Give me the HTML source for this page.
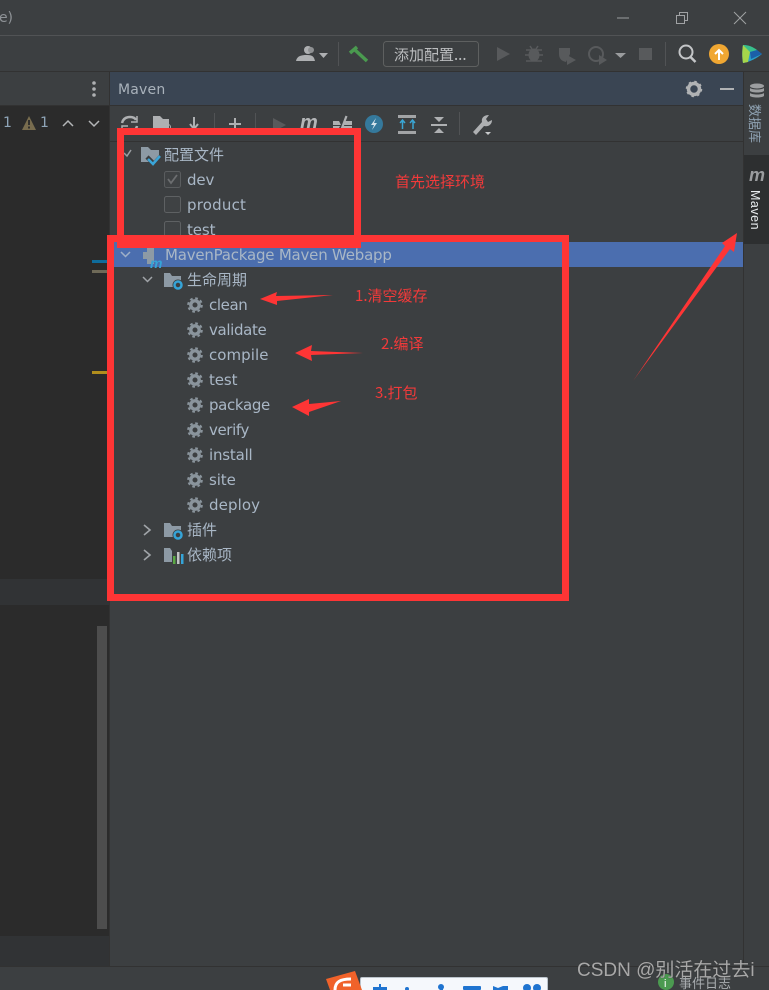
<!DOCTYPE html>
<html><head><meta charset="utf-8"><style>
*{box-sizing:border-box}
html,body{margin:0;padding:0;width:769px;height:990px;overflow:hidden;background:#3c3f41}
body{position:relative;font-family:"Liberation Sans","Noto Sans CJK SC",sans-serif}
.a{position:absolute}
.t{position:absolute;white-space:nowrap;color:#a9b7c6;font-size:15px;line-height:20px;font-family:"DejaVu Sans","Noto Sans CJK SC",sans-serif;letter-spacing:-.1px}
.c{font-family:"Noto Sans CJK SC",sans-serif;font-size:15px;letter-spacing:0}
.r{position:absolute;white-space:nowrap;color:#f23a3a;font-size:15px;line-height:18px;font-family:"Noto Sans CJK SC",sans-serif}
svg{position:absolute;overflow:visible}
</style></head><body>
<div class="a" style="left:0;top:35px;width:769px;height:1px;background:#515355"></div>
<div class="a" style="left:0;top:71px;width:769px;height:1px;background:#323232"></div>
<div class="a" style="left:0;top:106px;width:110px;height:860px;background:#2b2b2b"></div>
<div class="a" style="left:0;top:105px;width:110px;height:1px;background:#323232"></div>
<div class="a" style="left:0;top:579px;width:109px;height:26px;background:#313335"></div>
<div class="a" style="left:0;top:936px;width:109px;height:30px;background:#313335"></div>
<div class="a" style="left:97px;top:626px;width:10px;height:303px;background:#4d4d4d"></div>
<div class="a" style="left:109px;top:72px;width:1px;height:895px;background:#323232"></div>
<div class="a" style="left:0;top:966px;width:769px;height:1px;background:#323232"></div>
<div class="a" style="left:110px;top:72px;width:633px;height:33px;background:#3a4553"></div>
<div class="a" style="left:110px;top:105px;width:633px;height:1px;background:#323232"></div>
<div class="a" style="left:110px;top:141px;width:633px;height:1px;background:#323232"></div>
<div class="a" style="left:743px;top:72px;width:1px;height:895px;background:#323232"></div>
<div class="a" style="left:744px;top:155px;width:25px;height:89px;background:#2d2f30"></div>
<div class="a" style="left:110px;top:242px;width:633px;height:25px;background:#4b6eaf"></div>
<div class="a" style="left:92px;top:260px;width:18px;height:3px;background:#0f6c9c"></div>
<div class="a" style="left:92px;top:270px;width:18px;height:3px;background:#6f6a58"></div>
<div class="a" style="left:92px;top:371px;width:18px;height:3px;background:#b18e1d"></div>

<div class="t" style="left:-1px;top:8px;font-size:14px;color:#8e9296">e)</div>
<div class="t" style="left:118px;top:80px;font-size:14px;color:#a9b2bb;letter-spacing:.2px">Maven</div>
<div class="t" style="left:3px;top:113px;font-size:14px;color:#8fa5b8">1</div>
<div class="t" style="left:40px;top:113px;font-size:14px;color:#8fa5b8">1</div>

<!-- window controls -->
<svg style="left:0;top:0" width="769" height="72" fill="none">
<path d="M617 18h12" stroke="#9a9c9e" stroke-width="1"/>
<rect x="676.500" y="15.500" width="8" height="8" stroke="#a0a2a4"/><path d="M679.500 15v-2.500h8v8H685" stroke="#a0a2a4"/>
<path d="M734 12l12 12M746 12l-12 12" stroke="#a0a2a4"/>
<circle cx="308" cy="50" r="4" fill="#aeb0b2"/><path d="M296 61c1-5 5-6 11-6s7 2 8 6z" fill="#aeb0b2"/><circle cx="311" cy="50" r="3" fill="#8f9193"/>
<path d="M319 53h9l-4.500 5z" fill="#aeb0b2"/>
<path d="M338.500 42v24" stroke="#515355"/>
<path d="M350 53L357 47" stroke="#4a9a4f" stroke-width="3.500"/><path d="M355 50L367 61" stroke="#4a9a4f" stroke-width="3.500"/>
<rect x="383.500" y="41.500" width="95" height="25" rx="3" stroke="#5e6060"/>
<path d="M497 47l13 7-13 7z" fill="#585a5c"/>
<ellipse cx="534" cy="55" rx="5.500" ry="6.500" fill="#585a5c"/><path d="M526 50l16 0M525 55h18M526 61h16M530 46l2 3M538 46l-2 3" stroke="#585a5c" stroke-width="1.500"/>
<path d="M559 48h11v6l-4 8c-5-1-7-4-7-8z" fill="#585a5c"/><path d="M567 55l9 5-9 5z" fill="#585a5c"/>
<circle cx="596" cy="54" r="7" stroke="#585a5c" stroke-width="2"/><path d="M599 55l8 5-8 5z" fill="#585a5c"/>
<path d="M615 53h11l-5.500 5z" fill="#9a9c9e"/>
<rect x="639" y="48" width="13" height="12" fill="#585a5c"/>
<path d="M665.500 42v24" stroke="#515355"/>
<circle cx="686" cy="52" r="6.500" stroke="#c4c6c8" stroke-width="2"/><path d="M690.500 57l5 5" stroke="#c4c6c8" stroke-width="2.500"/>
<circle cx="719" cy="54" r="10" fill="#f0a732"/><path d="M719 60v-10M715 54l4-4 4 4" stroke="#fff" stroke-width="2"/>
<path d="M743 45c7 0 14 5 19 9-5 4-12 8-19 9-1-5-1-13 0-18z" fill="#2a9fc8"/><path d="M743 45c6 0 10 2 14 5l-7 2z" fill="#38c08c"/><path d="M743 45l7 7-2 10-5 1c-1-5-1-13 0-18z" fill="#a5d64a"/><path d="M750 52l7-2 5 4-11 5z" fill="#1b5fa8"/>
</svg>
<div class="t c" style="left:394px;top:45px;color:#bbbdbf">添加配置...</div>

<!-- panel header/editor icons -->
<svg style="left:0;top:72px" width="769" height="70" fill="none">
<circle cx="94" cy="11" r="1.800" fill="#aeb0b2"/><circle cx="94" cy="17" r="1.800" fill="#aeb0b2"/><circle cx="94" cy="23" r="1.800" fill="#aeb0b2"/>
<path d="M22 58L29 44L36 58z" fill="#786c4e"/><path d="M29 48v5M29 54.500v2" stroke="#2b2b2b" stroke-width="1.800"/>
<path d="M63 54l5-5 5 5M89 49l5 5 5-5" stroke="#b4b6b8" stroke-width="1.500"/>
<circle cx="694" cy="17" r="5.500" stroke="#b0b2b4" stroke-width="3.500"/><circle cx="694" cy="17" r="7.500" stroke="#b0b2b4" stroke-width="1.500" stroke-dasharray="2.500 3.400"/>
<path d="M720 17h14" stroke="#b0b2b4" stroke-width="2"/>
<path d="M122 51c1-4 4-6 8-6 3 0 5 1 6 3M137 54c-1 4-4 6-8 6-3 0-5-1-6-3" stroke="#aeb0b2" stroke-width="2.500"/><path d="M137 44v6h-6M122 60v-6h6" stroke="#aeb0b2" stroke-width="1.500"/>
<path d="M153 44h7l3 3h6v9l-16 4z" fill="#aeb0b2"/><circle cx="168" cy="55" r="2.500" stroke="#aeb0b2"/>
<path d="M194 45v11M190 52l4 5 4-5" stroke="#aeb0b2" stroke-width="2"/>
<path d="M214.500 41v22M255.500 41v22M459.500 40v23" stroke="#515355"/>
<path d="M235 46v12M229 52h12" stroke="#aeb0b2" stroke-width="2"/>
<path d="M273 46l13 7-13 7z" fill="#585a5c"/>
<path d="M333 49h6l2 4h-8zM333 54h7l-1 2h-6zM345 49h7v4h-8zM343 54h9v2h-9z" fill="#aeb0b2"/><path d="M346.500 44l-6 16" stroke="#aeb0b2" stroke-width="2.200"/>
<circle cx="374" cy="52" r="9" fill="#35799c"/><path d="M376 46l-5 7h3l-2 5 5-7h-3z" fill="#d5e4ec"/>
<path d="M398 44h18v3h-18zM398 60h18v3h-18z" fill="#a2a4a6" transform="translate(0,-1)"/><path d="M402.500 57v-9M413 57v-9M400 51l2.500-3 2.500 3M410 51l2.500-3 2.500 3" stroke="#3aa5d3" stroke-width="1.500"/>
<path d="M431 53h16" stroke="#aeb0b2" stroke-width="2"/><path d="M434 45h10l-5 5zM434 61h10l-5-5z" fill="#aeb0b2"/>
<path d="M473 60l9-10c-1-4 2-7 7-7l-3 4 2 3 4-2c0 5-4 7-8 6l-8 9z" fill="#aeb0b2"/><path d="M485 60h6l-3 3z" fill="#c8cacc"/>
</svg>
<div class="t" style="left:300px;top:113px;font-size:20px;font-weight:bold;font-style:italic;color:#b4b6b8;font-family:'Liberation Sans',sans-serif">m</div>

<!-- tree -->
<svg style="left:0;top:142px" width="300" height="430" fill="none">
<path d="M124 11l3 3 4-6" stroke="#9a9ea2" stroke-width="1.500"/>
<path d="M141 5h7l3 3h8v12h-18z" fill="#8d9aa5"/><path d="M147 15l7 7 8-9" stroke="#3c3f41" stroke-width="4.500"/><path d="M148 17l5 5 7-8" stroke="#3aa5d8" stroke-width="2.500"/>
<rect x="164.500" y="29.500" width="16" height="16" rx="2" fill="#3f4244" stroke="#5a5d5f"/><path d="M168 37l3 4 6-8" stroke="#6c6e70" stroke-width="1.800"/>
<rect x="164.500" y="54.500" width="16" height="16" rx="2" fill="#3f4244" stroke="#5e6163"/>
<rect x="164.500" y="79.500" width="16" height="16" rx="2" fill="#3f4244" stroke="#5e6163"/>
<path d="M121 110l4.500 4.500 4.500-4.500" stroke="#9fb0c8" stroke-width="1.500"/>
<path d="M147 105h7v17h-7zM143 110h8v7h-8z" fill="#8d9aa5"/>
<path d="M143 135l4.500 4.500 4.500-4.500" stroke="#a0a4a8" stroke-width="1.500"/>
<path d="M144 383l6 5-6 5M144 408l6 5-6 5" stroke="#a0a4a8" stroke-width="1.600"/>
<path d="M164 131h6l2 3h9v11h-17z" fill="#8d9aa5"/><circle cx="178" cy="143" r="5.500" fill="#3c3f41"/><circle cx="178" cy="143" r="3.500" stroke="#35a4d8" stroke-width="2.500"/>
<path d="M164 381h6l2 3h9v11h-17z" fill="#8d9aa5"/><circle cx="178" cy="393" r="5.500" fill="#3c3f41"/><circle cx="178" cy="393" r="3.500" stroke="#35a4d8" stroke-width="2.500"/>
<path d="M164 406h6l2 3h9v11h-17z" fill="#8d9aa5"/><path d="M172 409h12v13h-12z" fill="#3c3f41"/><path d="M173 414h2.500v8H173z" fill="#5aa845"/><path d="M177 410h2.500v12H177z" fill="#c2c4c6"/><path d="M181 412h2.500v10H181z" fill="#35a4d8"/>
<g stroke="#8a949c">
<g id="g"><circle cx="195" cy="163" r="4.200" stroke-width="3.400"/><circle cx="195" cy="163" r="6.800" stroke-width="2" stroke-dasharray="2.700 2.640"/></g>
<use href="#g" y="25"/><use href="#g" y="50"/><use href="#g" y="75"/><use href="#g" y="100"/><use href="#g" y="125"/><use href="#g" y="150"/><use href="#g" y="175"/><use href="#g" y="200"/>
</g>
</svg>
<div class="t" style="left:150px;top:253px;font-size:14px;font-weight:bold;font-style:italic;color:#35a4d8;font-family:'Liberation Sans',sans-serif">m</div>
<div class="t c" style="left:164px;top:145px">配置文件</div>
<div class="t" style="left:187px;top:170px">dev</div>
<div class="t" style="left:187px;top:195px;letter-spacing:.2px">product</div>
<div class="t" style="left:187px;top:220px">test</div>
<div class="t" style="left:165px;top:245px;letter-spacing:-.22px">MavenPackage Maven Webapp</div>
<div class="t c" style="left:187px;top:270px">生命周期</div>
<div class="t" style="left:209px;top:295px;letter-spacing:-.4px">clean</div>
<div class="t" style="left:209px;top:320px;letter-spacing:-.35px">validate</div>
<div class="t" style="left:209px;top:345px;letter-spacing:.05px">compile</div>
<div class="t" style="left:209px;top:370px">test</div>
<div class="t" style="left:209px;top:395px;letter-spacing:-.35px">package</div>
<div class="t" style="left:209px;top:420px;letter-spacing:-.4px">verify</div>
<div class="t" style="left:209px;top:445px;letter-spacing:-.2px">install</div>
<div class="t" style="left:209px;top:470px">site</div>
<div class="t" style="left:209px;top:495px;letter-spacing:.1px">deploy</div>
<div class="t c" style="left:187px;top:520px">插件</div>
<div class="t c" style="left:187px;top:545px">依赖项</div>

<!-- right sidebar -->
<svg style="left:744px;top:82px" width="25" height="20" fill="#9c9ea0"><ellipse cx="13" cy="4" rx="7" ry="2.500"/><path d="M6 6c2 2 12 2 14 0v3c-2 2-12 2-14 0zM6 11c2 2 12 2 14 0v3c-2 2-12 2-14 0z"/></svg>
<div class="t c" style="left:748px;top:104px;writing-mode:vertical-rl;text-orientation:sideways;font-size:13px;line-height:14px;color:#8fa2b2">数据库</div>
<div class="t" style="left:749px;top:165px;font-size:18px;font-weight:bold;font-style:italic;color:#9a9c9e;font-family:'Liberation Sans',sans-serif">m</div>
<div class="t" style="left:747px;top:190px;writing-mode:vertical-rl;font-size:12.500px;line-height:15px;color:#e8ecef;font-family:'Liberation Sans',sans-serif;letter-spacing:.5px">Maven</div>

<!-- red boxes -->
<div class="a" style="left:117px;top:128px;width:244px;height:120px;border:7px solid #fe3535"></div>
<div class="a" style="left:107px;top:235px;width:462px;height:366px;border:7px solid #fe3535"></div>

<!-- arrows -->
<svg style="left:0;top:0" width="769" height="990" fill="#fe3535">
<path d="M260 299l17-7-1 4 57-1-56 6 0 4z"/>
<path d="M295 353l17-8-1 6 52 2-52 2 1 6z"/>
<path d="M292 407l17-8-0 5 32-3-32 11 0 4z"/>
<path d="M737 233L722 243L725 246L633 381L730 249L734 252z"/>
</svg>
<div class="r" style="left:395px;top:173px">首先选择环境</div>
<div class="r" style="left:355px;top:287px">1.清空缓存</div>
<div class="r" style="left:381px;top:335px">2.编译</div>
<div class="r" style="left:375px;top:384px">3.打包</div>

<!-- bottom overlays -->
<div class="a" style="left:360px;top:977px;width:188px;height:13px;background:#f5f8fc;border:1px solid #bcc4cc;border-bottom:0;border-radius:2px 2px 0 0"></div>
<svg style="left:0;top:0" width="769" height="990">
<path d="M326 979l29-8 7 19h-32z" fill="#f0622a"/>
<path d="M335 990c0-8 5-11 16-11M343 985h8" stroke="#fff" stroke-width="3" fill="none"/>
<g fill="#1f74d0"><rect x="373" y="987" width="14" height="3"/><rect x="379" y="984" width="2" height="6"/><circle cx="407" cy="989" r="2"/><circle cx="441" cy="987" r="3"/><rect x="440" y="987" width="3" height="3"/><rect x="463" y="986" width="18" height="4" rx="1"/><path d="M493 986l5 2 5-2 5 0v4h-15z"/><circle cx="527" cy="988" r="4"/><circle cx="537" cy="988" r="4"/></g>
<circle cx="666" cy="982" r="8" fill="#4b9a50"/>
</svg>
<div class="t" style="left:664px;top:974px;font-size:11px;color:#fff;font-family:'Liberation Sans',sans-serif">i</div>
<div class="t c" style="left:679px;top:973px;font-size:13px;color:#a9adb0">事件日志</div>
<div class="a" style="left:577px;top:959px;white-space:nowrap;color:#a8a8a8;font-size:19px;line-height:24px;font-family:'Liberation Sans','Noto Sans CJK SC',sans-serif;text-shadow:0 0 1px #333">CSDN @别活在过去i</div>
</body></html>
